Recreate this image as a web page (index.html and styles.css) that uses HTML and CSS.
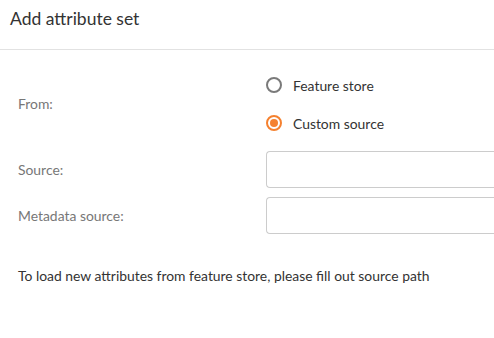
FILE: index.html
```html
<!DOCTYPE html>
<html>
<head>
<meta charset="utf-8">
<link rel="stylesheet" href="styles.css">
</head>
<body>
<div class="dialog">
  <header class="header"><h1 class="title">Add attribute set</h1></header>
  <div class="content">
    <div class="row row-from">
      <div class="label">From:</div>
      <div class="radios">
        <label class="radio"><span class="circle"></span><span class="radio-text">Feature store</span></label>
        <label class="radio"><span class="circle checked"></span><span class="radio-text">Custom source</span></label>
      </div>
    </div>
    <div class="row row-source">
      <div class="label">Source:</div>
      <div class="input"></div>
    </div>
    <div class="row row-meta">
      <div class="label">Metadata source:</div>
      <div class="input"></div>
    </div>
    <p class="hint">To load new attributes from feature store, please fill out source path</p>
  </div>
</div>
</body>
</html>
```
FILE: styles.css
```css
* { box-sizing: border-box; }
html, body { margin: 0; padding: 0; background: #fff; }
body { font-family: Lato, "Open Sans", sans-serif; color: #333; overflow: hidden; width: 494px; height: 338px; }
.dialog { width: 494px; }
.header { height: 50px; border-bottom: 1px solid #e2e2e2; padding: 9px 0 0 10px; }
.title { margin: 0; font-size: 17.5px; font-weight: 400; line-height: 20px; color: #333; }
.content { padding-left: 18px; }
.row { display: flex; align-items: center; }
.label { width: 248px; flex: none; font-size: 13.9px; color: #777; line-height: 16px; }
.row-from { padding-top: 25px; }
.radios { display: flex; flex-direction: column; gap: 18px; }
.radio { display: flex; align-items: center; height: 20px; }
.circle { width: 16px; height: 16px; border: 2px solid #7a7a7a; border-radius: 50%; display: flex; align-items: center; justify-content: center; flex: none; }
.circle.checked { border-color: #f5812f; }
.circle.checked::after { content: ""; width: 8px; height: 8px; border-radius: 50%; background: #f5812f; }
.radio-text { margin-left: 11px; font-size: 13.9px; color: #333; }
.row-source { margin-top: 18px; }
.row-meta { margin-top: 9px; }
.input { flex: 1; height: 37px; border: 1px solid #cccccc; border-right: none; border-radius: 4px 0 0 4px; }
.hint { margin: 33px 0 0; font-size: 13.9px; line-height: 18px; color: #333; }
```
